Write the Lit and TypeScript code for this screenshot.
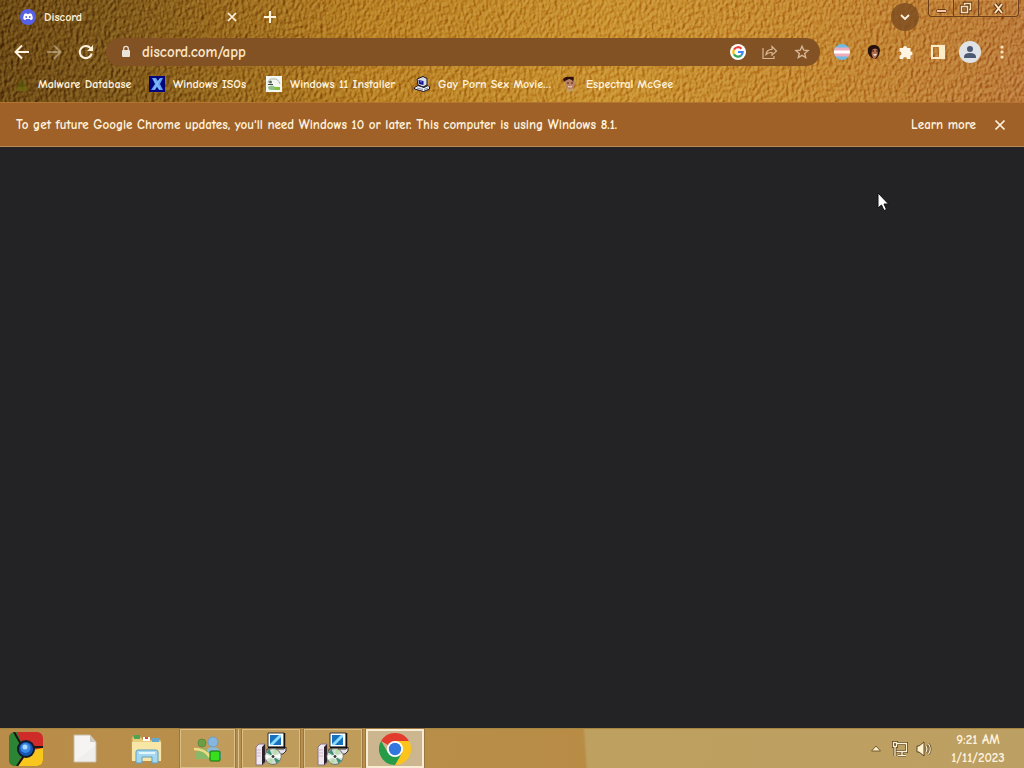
import { LitElement, html, svg, css } from "lit";
import { customElement } from "lit/decorators.js";

const closeIcon = svg`<path d="M4 4l8 8M12 4l-8 8" fill="none" stroke="currentColor" stroke-width="1.7"/>`;

const bookmarks = [
  {
    title: "Malware Database",
    icon: svg`<path d="M7.500 0L15 14H1z" fill="#63620f" opacity=".4"/><path d="M8 4l-4 7h8z" fill="#4f5208" opacity=".6"/><path d="M2 15l3-5 3 3 4-3 3 5z" fill="#6f6a10" opacity=".7"/>`,
  },
  {
    title: "Windows ISOs",
    icon: svg`<rect width="16" height="16" fill="#04047c"/><path d="M3 2h4l2 3 2-3h3l-3 6 3 6h-4l-2-3-2 3H2l4-6z" fill="#5fa0ee"/><path d="M5 3l6 10M11 3L5 13" stroke="#86c0fb" stroke-width="1.200"/>`,
  },
  {
    title: "Windows 11 Installer",
    icon: svg`<rect width="16" height="16" fill="#f4f6f1"/><path d="M2 7q1-5 5-4 5-1 7 5" fill="none" stroke="#a9b4ab"/><circle cx="4.500" cy="6" r="1.500" fill="#5a6b62"/><path d="M2 11q4-3 7 0l5 1v2H5q-3 0-3-3z" fill="#8fc088"/><path d="M8 11h6v3H9z" fill="#85bf3f"/><path d="M2 8.500h5" stroke="#444"/>`,
  },
  {
    title: "Gay Porn Sex Movie…",
    icon: svg`<path d="M3 3l6-2.500 4 2V9l-4 2-5-2z" fill="#dcdce4" stroke="#14142a"/><path d="M4.500 4l5 1v4l-4.500-1z" fill="#16178c"/><path d="M6 5l2 .5v1L6 6z" fill="#6f79e8"/><path d="M.5 11.500L4 9.500l6 2 4-2 1.500 1.500v2l-6 2.500-9-2.500z" fill="#eeeef4" stroke="#14142a"/><path d="M3 12l6 1.500M10 13.500l4-1.500" stroke="#8a8aa0"/>`,
  },
  {
    title: "Espectral McGee",
    icon: svg`<path d="M3 3h9l1 5-2 5-3 1-3-2-2-4z" fill="#b98262"/><path d="M1 3q3-3 6-2 4-1 5 1l-1 4-1-2-3-1-4 2-1 1z" fill="#2c1010"/><path d="M5 7h2M9 7h2" stroke="#4b2418"/><path d="M6 10.500q2 1 4 0" stroke="#f1ded0" fill="none"/><path d="M5 12l3 2 3-2v2l-3 2-3-2z" fill="#bfa276"/>`,
  },
];

const installerIcon = svg`
  <path d="M1 15l3-3h6v19l-3 2H1z" fill="#efe9ef" stroke="#8b7485"/>
  <path d="M7 15v18l3-3V12z" fill="#2b222d"/>
  <path d="M2 18h4M2 21h4M2 24h4" stroke="#d3b3c8"/>
  <path d="M13 1h16v14H13z" fill="#fff" stroke="#33333d"/>
  <path d="M29.500 1v14.500H13" fill="none" stroke="#111" stroke-width="1.500"/>
  <path d="M15 3h11v10H15z" fill="#1672bd"/>
  <path d="M15 12l9-9h2v2l-8 8h-3z" fill="#8edcff"/>
  <path d="M12 17h17l2-2v4l-3 3H12z" fill="#e6e0e8" stroke="#33333d"/>
  <circle cx="18" cy="24.500" r="8" fill="#d2ddd2" stroke="#6b726d"/>
  <path d="M18 24.500l-6.500-4 3-3zM18 24.500l6.500 4-3 3z" fill="#3b8d74"/>
  <path d="M18 24.500l7.500-3v5zM18 24.500l-7.500 3v-5z" fill="#f7fff5"/>
  <path d="M18 24.500l1-7.500 4 2zM18 24.500l-1 7.500-4-2z" fill="#b6dda8"/>
  <circle cx="18" cy="24.500" r="2" fill="#3d3b3b" stroke="#fff"/>`;

@customElement("leather-texture")
class LeatherTexture extends LitElement {
  static styles = css`
    :host {
      display: block;
      contain: size;
      overflow: hidden;
    }
    svg {
      display: block;
      width: 100%;
      height: 100%;
    }
  `;

  render() {
    return html`<svg aria-hidden="true">
      <defs>
        <linearGradient id="base">
          <stop offset="0" stop-color="#6d4914" />
          <stop offset=".1" stop-color="#7b5518" />
          <stop offset=".22" stop-color="#98691c" />
          <stop offset=".36" stop-color="#b98123" />
          <stop offset=".6" stop-color="#c9912e" />
          <stop offset=".8" stop-color="#c58930" />
          <stop offset="1" stop-color="#bb7a38" />
        </linearGradient>
        <filter id="grain" x="0" y="0" width="100%" height="100%" color-interpolation-filters="sRGB">
          <feTurbulence type="fractalNoise" baseFrequency=".32 .22" numOctaves="3" seed="8" result="noise" />
          <feDiffuseLighting in="noise" surfaceScale="1.8" lighting-color="#b6b6b6" result="relief">
            <feDistantLight azimuth="215" elevation="46" />
          </feDiffuseLighting>
          <feBlend in="relief" in2="SourceGraphic" mode="soft-light" />
        </filter>
      </defs>
      <rect width="100%" height="100%" fill="url(#base)" filter="url(#grain)" />
    </svg>`;
  }
}

@customElement("app-root")
class AppRoot extends LitElement {
  static styles = css`
    :host {
      display: flex;
      flex-direction: column;
      height: 100vh;
      overflow: hidden;
      background: #232225;
      color: #fff3df;
      font: 700 12px/16px "Comic Sans MS", "Comic Neue", "Liberation Sans", sans-serif;
    }
    * {
      box-sizing: border-box;
    }
    button {
      display: flex;
      align-items: center;
      justify-content: center;
      padding: 0;
      border: 0;
      background: none;
      color: inherit;
      font: inherit;
    }
    a {
      color: inherit;
      text-decoration: none;
    }
    svg {
      display: block;
      flex: none;
    }
    .browser {
      display: grid;
      flex: none;
    }
    .browser > * {
      grid-area: 1 / 1;
      min-width: 0;
    }
    .tabs {
      display: flex;
      height: 34px;
      padding: 0 5px 0 20px;
    }
    .tab {
      display: flex;
      align-items: center;
      gap: 8px;
      width: 220px;
    }
    .tab-title {
      flex: 1;
    }
    .new-tab {
      width: 24px;
      margin-left: 18px;
    }
    .search-tabs {
      width: 28px;
      height: 28px;
      margin: 3px 9px 0 auto;
      border-radius: 50%;
      background: #7c4c20d0;
    }
    .window-controls {
      display: flex;
      height: 17px;
      border: 1px solid #6f3f1a;
      border-top: 0;
      border-radius: 0 0 4px 4px;
      box-shadow: inset 0 0 0 1px #d6984c70;
    }
    .window-controls button {
      width: 24px;
    }
    .window-controls button + button {
      width: 25px;
      border-left: 1px solid #6f3f1a;
    }
    .window-controls button.close {
      width: 40px;
    }
    .toolbar {
      display: flex;
      align-items: center;
      height: 36px;
      padding: 0 6px;
    }
    .toolbar button {
      width: 32px;
      height: 28px;
    }
    .disabled {
      opacity: 0.4;
    }
    .omnibox {
      display: flex;
      flex: 1;
      align-items: center;
      min-width: 0;
      height: 28px;
      margin: 0 6px 0 4px;
      padding: 0 2px 0 12px;
      border-radius: 14px;
      background: #825124;
    }
    .omnibox input {
      flex: 1;
      min-width: 0;
      height: 28px;
      padding: 0 0 0 8px;
      border: 0;
      outline: 0;
      background: none;
      color: #fbe6c8;
      font: inherit;
      font-size: 15px;
    }
    .soft {
      color: #d6b795;
    }
    .bookmarks {
      display: grid;
      grid-template-columns: 135px 117px 148px 148px auto;
      align-items: center;
      height: 32px;
      padding: 0 14px 4px;
      white-space: nowrap;
    }
    .bookmarks a {
      display: flex;
      align-items: center;
      gap: 8px;
    }
    .infobar {
      display: flex;
      flex: none;
      align-items: center;
      height: 45px;
      padding: 0 16px;
      border-top: 1px solid #b3752f;
      border-bottom: 1px solid #b98a58;
      background: #9f6127;
      font-size: 13px;
    }
    .infobar p {
      flex: 1;
      margin: 0;
    }
    .infobar button {
      width: 16px;
      margin-left: 16px;
    }
    main {
      flex: 1;
      min-height: 0;
    }
    .taskbar {
      display: flex;
      flex: none;
      gap: 4px;
      height: 40px;
      border-top: 1px solid #a5853f;
      background: linear-gradient(86deg, #b98d49 0, #b78f4b 30%, #b88c45 57%, #bea160 57.3%, #bc9f62 100%);
    }
    .task {
      width: 58px;
      height: 39px;
    }
    .start {
      width: 52px;
    }
    .running {
      border: 1px solid #d9be87;
      outline: 1px solid #9c7640;
      outline-offset: 0;
      background: #c6a56799;
    }
    .group {
      width: 55px;
      margin-right: 3px;
      box-shadow: 3px 0 #b38a4b, 4px 0 #dcc28c;
    }
    .active {
      border: 2px solid #f8edd3;
      background: #cbb68f;
    }
    .tray {
      display: flex;
      align-items: center;
      gap: 8px;
      margin-left: auto;
      padding-right: 16px;
    }
    .tray button {
      width: 16px;
      height: 32px;
    }
    .clock {
      width: 60px;
      margin-left: 8px;
      font-size: 13px;
      line-height: 18px;
      text-align: center;
      white-space: nowrap;
    }
    .cursor {
      position: absolute;
      left: 877px;
      top: 192px;
    }
  `;

  render() {
    return html`
      <header class="browser">
        <leather-texture></leather-texture>
        <div>
          <div class="tabs">
            <div class="tab">
              <svg width="16" height="16" viewBox="0 0 16 16">
                <circle cx="8" cy="8" r="8" fill="#5661e8" />
                <path d="M4.500 4.800Q6 4 6.500 4.200L7 5h2l.5-.8q.5-.2 2 .6 1.500 2.400 1.300 5-1 1.200-2.300 1.300l-.6-1H6.100l-.6 1q-1.300-.1-2.300-1.300-.2-2.600 1.300-5z" fill="#fff" />
                <ellipse cx="6.200" cy="8" rx=".9" ry="1" fill="#5661e8" />
                <ellipse cx="9.800" cy="8" rx=".9" ry="1" fill="#5661e8" />
              </svg>
              <span class="tab-title">Discord</span>
              <button aria-label="Close tab"><svg width="16" height="16" viewBox="0 0 16 16">${closeIcon}</svg></button>
            </div>
            <button class="new-tab" aria-label="New tab">
              <svg width="14" height="14" viewBox="0 0 14 14"><path d="M7 1v12M1 7h12" stroke="currentColor" stroke-width="2" /></svg>
            </button>
            <button class="search-tabs" aria-label="Search tabs">
              <svg width="12" height="12" viewBox="0 0 12 12"><path d="M2 4l4 4 4-4" fill="none" stroke="currentColor" stroke-width="1.800" /></svg>
            </button>
            <div class="window-controls">
              <button aria-label="Minimize">
                <svg width="13" height="13" viewBox="0 0 13 13"><rect x="1.500" y="7.500" width="10" height="3" rx="1" fill="#f6c9a0" stroke="#6a3a18" /></svg>
              </button>
              <button aria-label="Restore">
                <svg width="14" height="14" viewBox="0 0 14 14">
                  <g fill="none" stroke="#5d3413" stroke-width="3.400"><path d="M5.500 4V2.500h6v6H10" /><rect x="2.500" y="5.500" width="6" height="6" /></g>
                  <g fill="none" stroke="#fbdcae" stroke-width="1.600"><path d="M5.500 4V2.500h6v6H10" /><rect x="2.500" y="5.500" width="6" height="6" /></g>
                </svg>
              </button>
              <button class="close" aria-label="Close">
                <svg width="13" height="13" viewBox="0 0 13 13"><path d="M3 2l7 9M10 2l-7 9" stroke="#5d3413" stroke-width="4" /><path d="M3 2l7 9M10 2l-7 9" stroke="#fbe3bd" stroke-width="2" /></svg>
              </button>
            </div>
          </div>

          <nav class="toolbar" aria-label="Navigation">
            <button aria-label="Back">
              <svg width="16" height="16" viewBox="0 0 16 16"><path d="M15 8H2M8 1.500L1.500 8 8 14.500" fill="none" stroke="currentColor" stroke-width="2" /></svg>
            </button>
            <button class="disabled" aria-label="Forward">
              <svg width="16" height="16" viewBox="0 0 16 16"><path d="M1 8h13M8 1.500L14.500 8 8 14.500" fill="none" stroke="currentColor" stroke-width="2" /></svg>
            </button>
            <button aria-label="Reload">
              <svg width="16" height="16" viewBox="0 0 16 16"><path d="M13.800 9.500A6.100 6.100 0 1 1 12.500 4" fill="none" stroke="currentColor" stroke-width="2" /><path d="M15 1v6H9z" fill="currentColor" /></svg>
            </button>
            <div class="omnibox">
              <svg width="16" height="16" viewBox="0 0 16 16"><rect x="4" y="6" width="8" height="7" rx="1" fill="#e9e2d8" /><path d="M5.700 7V4.700a2.300 2.300 0 0 1 4.600 0V7" fill="none" stroke="#e9e2d8" stroke-width="1.300" /></svg>
              <input type="text" aria-label="Address" value="discord.com/app" />
              <button aria-label="Search with Google">
                <svg width="16" height="16" viewBox="0 0 16 16">
                  <circle cx="8" cy="8" r="8" fill="#fff" />
                  <g fill="none" stroke-width="2.200">
                    <path d="M11.500 4.700A4.700 4.700 0 0 0 4 5.600" stroke="#ea4335" />
                    <path d="M4 5.600a4.700 4.700 0 0 0 0 4.800" stroke="#fbbc05" />
                    <path d="M4 10.400a4.700 4.700 0 0 0 7 1.200" stroke="#34a853" />
                    <path d="M11 11.600A4.700 4.700 0 0 0 12.700 8H8" stroke="#4285f4" />
                  </g>
                </svg>
              </button>
              <button class="soft" aria-label="Share">
                <svg width="16" height="16" viewBox="0 0 16 16"><path d="M1 4v10.500h11V12M4 10.500q.5-5 6-5.200V2.500L14.500 7 10 11.200V8.500Q6 8.300 4 10.500z" fill="none" stroke="currentColor" stroke-width="1.200" /></svg>
              </button>
              <button class="soft" aria-label="Bookmark">
                <svg width="16" height="16" viewBox="0 0 16 16"><path d="M8 2.200l1.700 4 4.300.4-3.300 2.800 1 4.200L8 11.300l-3.700 2.300 1-4.200L2 6.600l4.300-.4z" fill="none" stroke="currentColor" stroke-width="1.400" /></svg>
              </button>
            </div>
            <button aria-label="Flag extension">
              <svg width="16" height="16" viewBox="0 0 16 16">
                <clipPath id="round"><circle cx="8" cy="8" r="8" /></clipPath>
                <g clip-path="url(#round)"><path d="M0 0h16v16H0z" fill="#6dbbe0" /><path d="M0 3.500h16v9H0z" fill="#efadb9" /><path d="M0 6.500h16v3H0z" fill="#fff" /></g>
              </svg>
            </button>
            <button aria-label="Portrait extension">
              <svg width="16" height="16" viewBox="0 0 16 16"><path d="M2 5q1-4 6-4t6 5l-1 5-3 4-4-1q-5-3-4-9z" fill="#24100c" /><path d="M6 6q3-3 6 0l-.5 5L9 15l-2-1-1.500-4z" fill="#b3704f" /><path d="M6 7h2M10 7h2" stroke="#35140c" /><path d="M7 10.500q2 2.500 4-.5z" fill="#fff" /></svg>
            </button>
            <button aria-label="Extensions">
              <svg width="16" height="16" viewBox="0 0 16 16"><path d="M1.500 4H5a2 2 0 1 1 4 0h3.500v3.500a2 2 0 1 1 0 4V15H9a2 2 0 0 0-4 0H1.500v-3.500a2 2 0 0 0 0-4z" fill="#fff5e4" /></svg>
            </button>
            <button aria-label="Side panel">
              <svg width="16" height="16" viewBox="0 0 16 16"><path d="M1 1h14v14H1zM3 3v10h6V3z" fill="#fbecc9" fill-rule="evenodd" /></svg>
            </button>
            <button aria-label="Profile">
              <svg width="22" height="22" viewBox="0 0 22 22"><circle cx="11" cy="11" r="11" fill="#dfe3e6" /><circle cx="11" cy="8" r="3" fill="#4c5973" /><path d="M5 16q0-4 6-4t6 4v1H5z" fill="#4c5973" /></svg>
            </button>
            <button aria-label="Menu">
              <svg width="16" height="16" viewBox="0 0 16 16" fill="#fde3bd"><circle cx="8" cy="3" r="1.600" /><circle cx="8" cy="8" r="1.600" /><circle cx="8" cy="13" r="1.600" /></svg>
            </button>
          </nav>

          <nav class="bookmarks" aria-label="Bookmarks">
            ${bookmarks.map(
              (b) => html`<a href="#"><svg width="16" height="16" viewBox="0 0 16 16">${b.icon}</svg><span>${b.title}</span></a>`
            )}
          </nav>
        </div>
      </header>

      <section class="infobar">
        <p>To get future Google Chrome updates, you'll need Windows 10 or later. This computer is using Windows 8.1.</p>
        <a href="#">Learn more</a>
        <button aria-label="Dismiss"><svg width="16" height="16" viewBox="0 0 16 16"><path d="M3.500 3.500l9 9M12.500 3.500l-9 9" stroke="currentColor" stroke-width="1.700" /></svg></button>
      </section>

      <main></main>

      <footer class="taskbar">
        <button class="start" aria-label="Start">
          <svg width="34" height="34" viewBox="0 0 34 34">
            <clipPath id="tile"><rect x="0" y="0" width="34" height="34" rx="6" /></clipPath>
            <g clip-path="url(#tile)">
              <path d="M0 0h34v34H0z" fill="#cf2c29" />
              <path d="M0 0h8l7 17-6 17H0z" fill="#2c8435" />
              <path d="M34 16v18H9l10-15z" fill="#f8c71e" />
              <path d="M5 0l8 14M34 15H18M8 34l9-13" stroke="#1b1612" stroke-width="2" />
            </g>
            <circle cx="17" cy="17" r="9" fill="#121a2b" />
            <circle cx="17" cy="17" r="7" fill="#1857b1" />
            <circle cx="16.500" cy="16" r="5" fill="#3a8ae6" />
            <circle cx="16" cy="15" r="2.500" fill="#a9dcff" />
          </svg>
        </button>
        <button class="task" aria-label="Document">
          <svg width="26" height="30" viewBox="0 0 26 30"><path d="M2 1h16l6 7v20H2z" fill="#f5f4f2" stroke="#c9bda8" /><path d="M18 1v7h6z" fill="#cfcac4" /><path d="M3 27L23 12v15z" fill="#efeeed" /></svg>
        </button>
        <button class="task" aria-label="File Explorer">
          <svg width="34" height="32" viewBox="0 0 34 32">
            <path d="M2 4h9l2 3h18v20H2z" fill="#e8cd7a" stroke="#c6a24f" />
            <path d="M4 2h6v4H4z" fill="#4ea455" /><path d="M13 4h7v4h-7z" fill="#fff" /><path d="M15 4h3v2h-3z" fill="#cf4a3c" /><path d="M22 5h7v4h-7z" fill="#67a7ce" />
            <path d="M2 9h29v19H2z" fill="#f7e6a6" />
            <path d="M6 30V19q0-2 2-2h18q2 0 2 2v11h-6v-6H12v6z" fill="#a5d8ee" stroke="#5b9fc5" />
            <path d="M9 19h16v2H9z" fill="#e2f6ff" />
          </svg>
        </button>
        <button class="task running group" aria-label="Messenger">
          <svg width="28" height="28" viewBox="0 0 28 28">
            <path d="M11 24q-1-12 8-12t8 12z" fill="#8dbad4" /><circle cx="19" cy="7" r="5" fill="#86b6dd" stroke="#6f9fc4" />
            <path d="M2 24q-1-11 6-11t8 11z" fill="#8ab869" /><circle cx="8" cy="8" r="4" fill="#6c9f45" stroke="#5d8c40" />
            <path d="M0 14q11 0 16 8" fill="none" stroke="#f1dc84" stroke-width="2.500" />
            <rect x="16" y="16" width="10" height="10" rx="1" fill="#37df1f" stroke="#146b12" />
          </svg>
        </button>
        <button class="task running" aria-label="Setup"><svg width="32" height="34" viewBox="0 0 32 34">${installerIcon}</svg></button>
        <button class="task running" aria-label="Setup"><svg width="32" height="34" viewBox="0 0 32 34">${installerIcon}</svg></button>
        <button class="task running active" aria-label="Google Chrome">
          <svg width="32" height="32" viewBox="0 0 32 32">
            <path d="M16 16L2.140 8A16 16 0 0 1 29.860 8z" fill="#e33b2e" />
            <path d="M29.860 8A16 16 0 0 1 16 32l6.930-12L16 8z" fill="#fcc41c" />
            <path d="M2.140 8A16 16 0 0 0 16 32l6.930-12H9.070z" fill="#269b48" />
            <circle cx="16" cy="16" r="8" fill="#fff" /><circle cx="16" cy="16" r="6.200" fill="#3276e0" />
          </svg>
        </button>
        <div class="tray">
          <button aria-label="Show hidden icons"><svg width="12" height="8" viewBox="0 0 12 8"><path d="M6 1l4.500 5h-9z" fill="#fff2cf" stroke="#72572c" /></svg></button>
          <button aria-label="Network">
            <svg width="18" height="18" viewBox="0 0 18 18">
              <g fill="none" stroke="#5e4726" stroke-width="3"><path d="M6 3.500h9.500v8H5.500M7 15.500h8M11 12v3M4 7v9" /><rect x="2.500" y="2.500" width="3" height="4" /></g>
              <g fill="none" stroke="#fff2cf" stroke-width="1.300"><path d="M6 3.500h9.500v8H5.500M7 15.500h8M11 12v3M4 7v9" /><rect x="2.500" y="2.500" width="3" height="4" /></g>
            </svg>
          </button>
          <button aria-label="Volume">
            <svg width="18" height="18" viewBox="0 0 18 18">
              <path d="M2 6h2l5-4v14l-5-4H2z" fill="#fff2cf" stroke="#5e4726" />
              <g fill="none" stroke="#5e4726" stroke-width="2.600"><path d="M11 6q2 3 0 6M13.500 4q3.500 5 0 10" /></g>
              <g fill="none" stroke="#fff2cf" stroke-width="1.200"><path d="M11 6q2 3 0 6M13.500 4q3.500 5 0 10" /></g>
            </svg>
          </button>
          <time class="clock" datetime="2023-01-11T09:21">9:21 AM<br />1/11/2023</time>
        </div>
      </footer>

      <svg class="cursor" width="13" height="20" viewBox="0 0 13 20" aria-hidden="true"><path d="M1 1v15l3.500-3 2.500 5.500 2.500-1L7 12h4.500z" fill="#fff" stroke="#111" /></svg>
    `;
  }
}
